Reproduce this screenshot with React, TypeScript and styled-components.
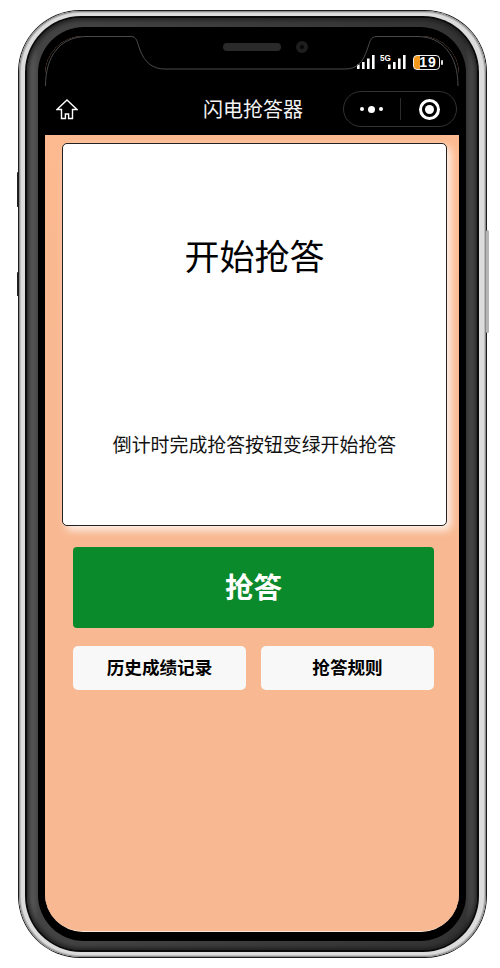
import React from "react";
import styled, { createGlobalStyle } from "styled-components";

const Global = createGlobalStyle`
  html, body { margin: 0; padding: 0; background: #fff; }
  body { font-family: "Noto Sans CJK SC", "Noto Sans", sans-serif; }
  * { box-sizing: border-box; }
`;

const Page = styled.div`
  width: 500px;
  height: 968px;
  padding: 10px 13px 10px 18px;
  overflow: hidden;
`;

const Edge = styled.div`
  position: relative;
  width: 469px;
  height: 948px;
  padding: 1px;
  border-radius: 62px;
  background: #1c1c1c;
`;

const SideKey = styled.span<{ $top: number; $height: number; $right?: boolean }>`
  position: absolute;
  top: ${(p) => p.$top}px;
  height: ${(p) => p.$height}px;
  width: ${(p) => (p.$right ? 3 : 1)}px;
  ${(p) => (p.$right ? "right: -2px;" : "left: -1px;")}
  background: ${(p) => (p.$right ? "#b5b5b5" : "#222")};
  border-radius: 2px;
`;

const Silver = styled.div`
  height: 100%;
  padding: 5px 7px 5px 6px;
  border-radius: 61px;
  background: #dcdcdc;
  box-shadow: inset 0 0 0 1px #8c8c8c, inset 0 0 0 2px #bdbdbd;
`;

const DarkRing = styled.div`
  height: 100%;
  padding: 2px;
  border-radius: 56px;
  background: #0a0a0a;
`;

const GrayRing = styled.div`
  height: 100%;
  padding: 9px 11px;
  border-radius: 54px;
  background: linear-gradient(90deg, #686868 0%, #444 2.6%, #333 97.4%, #585858 100%);
  box-shadow: inset 0 0 4px 2px #1e1e1e;
`;

const Bezel = styled.div`
  height: 100%;
  padding: 9px 7px;
  border-radius: 46px;
  background: #000;
`;

const Screen = styled.div`
  position: relative;
  height: 100%;
  display: flex;
  flex-direction: column;
  border-radius: 38px;
  overflow: hidden;
  background: #f8b891;
  border-bottom: 1px solid #fbe6d8;
`;

const NotchLine = styled.svg`
  position: absolute;
  top: 0;
  left: 0;
`;

const Header = styled.header`
  height: 99px;
  flex: none;
  padding: 18px 2px 0 11px;
  display: flex;
  flex-direction: column;
  background: #000;
`;

const StatusRow = styled.div`
  height: 16px;
  display: flex;
  justify-content: flex-end;
  align-items: center;
  padding-right: 17px;
`;

const FiveG = styled.span`
  position: absolute;
  left: -8px;
  top: -1px;
  font: 700 9px/9px "Liberation Sans", sans-serif;
  color: #fff;
  transform: scaleX(0.9);
  transform-origin: left center;
`;

const SignalWrap = styled.span<{ $ml: number }>`
  position: relative;
  display: block;
  width: 18px;
  height: 14px;
  margin-left: ${(p) => p.$ml}px;
`;

const Battery = styled.span`
  position: relative;
  display: flex;
  align-items: center;
  justify-content: center;
  width: 27px;
  height: 15px;
  margin-left: 7px;
  border: 1px solid #eee;
  border-radius: 4px;
  color: #fff;
  font: 700 14px/14px "Liberation Sans", sans-serif;
  letter-spacing: 1px;
  padding-left: 3px;
  background: linear-gradient(90deg, #f39a1c 0 6px, #000 6px);

  &::after {
    content: "";
    position: absolute;
    right: -4px;
    top: 4px;
    width: 2px;
    height: 5px;
    background: #ddd;
    border-radius: 1px;
  }
`;

const NavRow = styled.div`
  position: relative;
  margin-top: 21px;
  height: 36px;
  display: flex;
  align-items: center;
  justify-content: space-between;
`;

const HomeIcon = styled.svg`
  display: block;
  margin-top: 1px;
`;

const Title = styled.h1`
  position: absolute;
  left: 147px;
  top: 50%;
  transform: translateY(-50%);
  margin: 0;
  font-size: 20px;
  line-height: 26px;
  font-weight: 400;
  color: #f4f4f4;
  white-space: nowrap;
`;

const Capsule = styled.div`
  width: 114px;
  height: 36px;
  display: flex;
  align-items: center;
  border: 1px solid #333;
  border-radius: 18px;
`;

const CapsuleHalf = styled.div`
  flex: 1;
  display: flex;
  align-items: center;
  justify-content: center;
`;

const CapsuleRule = styled.span`
  width: 1px;
  height: 22px;
  background: #2c2c2c;
`;

const Dots = styled.span`
  display: flex;
  align-items: center;
  gap: 4px;
`;

const Dot = styled.i<{ $big?: boolean }>`
  display: block;
  width: ${(p) => (p.$big ? 7 : 4)}px;
  height: ${(p) => (p.$big ? 7 : 4)}px;
  border-radius: 50%;
  background: #fff;
`;

const Target = styled.span`
  display: block;
  width: 21px;
  height: 21px;
  margin-left: 2px;
  border: 3px solid #fff;
  border-radius: 50%;
  position: relative;

  &::after {
    content: "";
    position: absolute;
    inset: 3px;
    border-radius: 50%;
    background: #fff;
  }
`;

const Body = styled.main`
  flex: 1;
  padding: 8px 12px 0 17px;
  background: linear-gradient(180deg, #fdb98f 0, #f8b891 220px);
`;

const Card = styled.section`
  width: 385px;
  height: 383px;
  display: flex;
  flex-direction: column;
  align-items: center;
  background: #fff;
  border: 1px solid #222;
  border-radius: 5px;
  box-shadow: 4px 4px 9px rgba(255, 255, 255, 0.85);
`;

const Heading = styled.h2`
  margin: 85px 0 0;
  font-size: 35px;
  line-height: 52px;
  font-weight: 400;
  color: #000;
`;

const Hint = styled.p`
  margin: 149px 0 0;
  font-size: 18.9px;
  line-height: 28px;
  color: #111;
  white-space: nowrap;
`;

const Actions = styled.div`
  margin: 21px 0 0 11px;
  width: 361px;
  display: flex;
  flex-direction: column;
  gap: 18px;
`;

const MainButton = styled.button`
  height: 81px;
  padding: 0 0 4px;
  border: 0;
  border-radius: 4px;
  background: #0a8a2a;
  color: #fff;
  font: 700 28.5px "Noto Sans CJK SC", sans-serif;
`;

const SubRow = styled.div`
  display: flex;
  justify-content: space-between;
`;

const SubButton = styled.button`
  width: 173px;
  height: 44px;
  padding: 0 0 4px;
  border: 0;
  border-radius: 5px;
  background: #f8f8f8;
  color: #000;
  font: 700 17.6px "Noto Sans CJK SC", sans-serif;
`;

const Signal = () => (
  <svg width="18" height="14" viewBox="0 0 18 14" style={{ display: "block" }}>
    <g fill="#fff">
      <rect x="0" y="9.5" width="2.6" height="4.5" />
      <rect x="5" y="7" width="2.6" height="7" />
      <rect x="10" y="3.5" width="2.6" height="10.5" />
      <rect x="15" y="0" width="2.6" height="14" />
    </g>
  </svg>
);

export default function App() {
  return (
    <>
      <Global />
      <Page>
        <Edge>
          <SideKey $top={162} $height={35} />
          <SideKey $top={262} $height={24} />
          <SideKey $right $top={220} $height={103} />
          <Silver>
            <DarkRing>
              <GrayRing>
                <Bezel>
                  <Screen>
                    <Header>
                      <StatusRow>
                        <SignalWrap $ml={0}>
                          <Signal />
                        </SignalWrap>
                        <SignalWrap $ml={13}>
                          <FiveG>5G</FiveG>
                          <Signal />
                        </SignalWrap>
                        <Battery>19</Battery>
                      </StatusRow>
                      <NavRow>
                        <HomeIcon width="22" height="21" viewBox="0 0 22 21" fill="none" stroke="#fff" strokeWidth="1.4">
                          <path d="M11 1 L21 10.5 H16.5 V19.5 H12.6 V15 H9.4 V19.5 H5.5 V10.5 H1 Z" strokeLinejoin="miter" />
                        </HomeIcon>
                        <Title>闪电抢答器</Title>
                        <Capsule>
                          <CapsuleHalf>
                            <Dots>
                              <Dot />
                              <Dot $big />
                              <Dot />
                            </Dots>
                          </CapsuleHalf>
                          <CapsuleRule />
                          <CapsuleHalf>
                            <Target />
                          </CapsuleHalf>
                        </Capsule>
                      </NavRow>
                    </Header>
                    <Body>
                      <Card>
                        <Heading>开始抢答</Heading>
                        <Hint>倒计时完成抢答按钮变绿开始抢答</Hint>
                      </Card>
                      <Actions>
                        <MainButton>抢答</MainButton>
                        <SubRow>
                          <SubButton>历史成绩记录</SubButton>
                          <SubButton>抢答规则</SubButton>
                        </SubRow>
                      </Actions>
                    </Body>
                    <NotchLine width="414" height="70" viewBox="0 0 414 70" fill="none">
                      <path
                        d="M0.5 50 C0.5 20 15 0.5 42 0.5 H86 C92 0.5 92 6 95 14 C100 27 108 33 120 33 H300 C312 33 318 26 322 14 C325 6 325 0.5 332 0.5 H372 C398 0.5 413 20 413 50"
                        stroke="#4a4a4a"
                      />
                      <rect x="178" y="7" width="58" height="8" rx="4" fill="#2a2a2a" />
                      <circle cx="257" cy="11" r="6" fill="#1e1e1e" />
                      <circle cx="257" cy="11" r="2" fill="#060606" />
                    </NotchLine>
                  </Screen>
                </Bezel>
              </GrayRing>
            </DarkRing>
          </Silver>
        </Edge>
      </Page>
    </>
  );
}
